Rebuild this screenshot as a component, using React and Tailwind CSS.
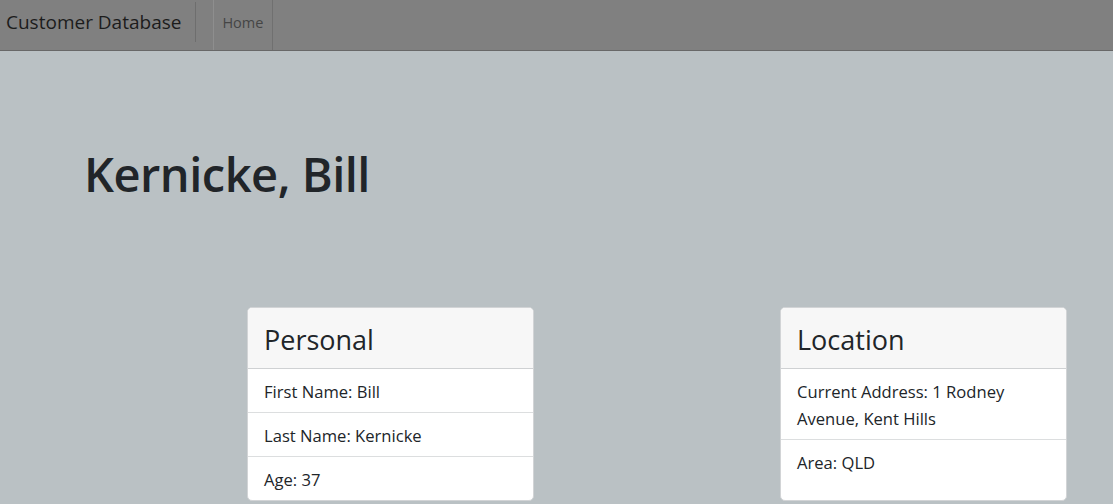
import React from "react";

const font = { fontFamily: '"Open Sans", "Noto Sans", sans-serif' };

const Card = ({ title, rows }) => (
  <div className="w-[287px] bg-white rounded-[5px] border border-[#d2d4d6] overflow-hidden">
    <div className="h-[61px] bg-[#f7f7f7] border-b border-[#cfd1d3] px-4 flex items-center">
      <h2 className="text-[27px] text-[#212529] leading-none pt-[2px]">{title}</h2>
    </div>
    {rows.map((row, idx) => (
      <div
        key={idx}
        className={`px-4 pt-[9px] text-[16.6px] leading-[27px] text-[#212529] ${
          idx < rows.length - 1 ? "border-b border-[#dcdedf]" : ""
        } ${row.tall ? "pb-[14px]" : "pb-[7px]"}`}
      >
        {row.text}
      </div>
    ))}
  </div>
);

const App = () => {
  return (
    <div className="w-[1113px] h-[504px] overflow-hidden bg-[#bac1c4]" style={font}>
      <nav className="h-[51px] bg-[#808080] border-b border-[#686868] flex items-stretch">
        <div className="flex items-center pl-[6px] pr-[14px] pb-[6px] text-[19px] text-[#1c1c1c]">
          Customer Database
        </div>
        <div className="w-px bg-[#6e6e6e] mt-[2px] mb-[8px]"></div>
        <div className="ml-[17px] flex items-stretch border-l border-[#8e8e8e] border-r border-r-[#707070]">
          <a className="pl-[8px] pr-[9px] flex items-center text-[14.5px] text-[#454545] pb-[5px]">Home</a>
        </div>
      </nav>

      <div className="pl-[84px] pt-[100px]">
        <h1 className="text-[47px] font-semibold text-[#212529] leading-none tracking-[-0.5px]">
          Kernicke, Bill
        </h1>
      </div>

      <div className="flex pl-[247px] gap-[246px] mt-[109px]">
        <Card
          title="Personal"
          rows={[
            { text: "First Name: Bill" },
            { text: "Last Name: Kernicke" },
            { text: "Age: 37" },
          ]}
        />
        <Card
          title="Location"
          rows={[
            { text: "Current Address: 1 Rodney Avenue, Kent Hills" },
            { text: "Area: QLD", tall: true },
          ]}
        />
      </div>
    </div>
  );
};

export default App;
